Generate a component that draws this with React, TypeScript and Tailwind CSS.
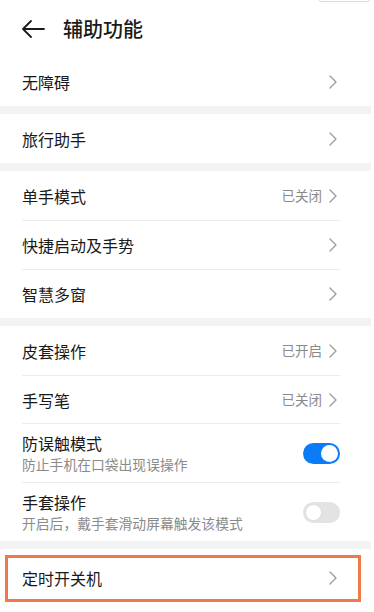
import React from "react";

const FONT = { fontFamily: '"Noto Sans CJK SC", "Noto Sans", sans-serif' };

function Chevron() {
  return (
    <svg width="8" height="14" viewBox="0 0 8 14" className="flex-shrink-0">
      <path d="M1 1l6 6-6 6" fill="none" stroke="#9b9b9b" strokeWidth="1.3" strokeLinecap="round" strokeLinejoin="round" />
    </svg>
  );
}

function Toggle({ on }: { on: boolean }) {
  return on ? (
    <div className="w-[37px] h-[21px] rounded-full bg-[#0a7cf6] flex items-center justify-end p-[2px]">
      <div className="w-[17px] h-[17px] rounded-full bg-white" />
    </div>
  ) : (
    <div className="w-[37px] h-[21px] rounded-full bg-[#e3e3e3] flex items-center p-[2px]">
      <div className="w-[17px] h-[17px] rounded-full bg-white border border-[#dcdcdc]" />
    </div>
  );
}

function Row({ label, status, divider, h = "h-[49px]" }: { label: string; status?: string; divider?: boolean; h?: string }) {
  return (
    <div className={`${h} flex flex-col`}>
      {divider && <div className="mx-[22px] mr-[31px] h-px bg-[#ececec]" />}
      <div className="flex-1 flex items-center pl-[22px] pr-[34px]">
        <span className="flex-1 text-[16px] text-[#191919]">{label}</span>
        {status && <span className="text-[13.5px] text-[#8a8a8a] mr-[7px]">{status}</span>}
        <Chevron />
      </div>
    </div>
  );
}

function ToggleRow({ label, sub, on }: { label: string; sub: string; on: boolean }) {
  return (
    <div className="h-[59px] flex flex-col">
      <div className="mx-[22px] mr-[31px] h-px bg-[#ececec]" />
      <div className="flex-1 flex items-center pl-[22px] pr-[31px]">
        <div className="flex-1 flex flex-col">
          <span className="text-[16px] leading-[22px] text-[#191919]">{label}</span>
          <span className="text-[13.8px] leading-[20px] text-[#8a8a8a]">{sub}</span>
        </div>
        <Toggle on={on} />
      </div>
    </div>
  );
}

function Band() {
  return <div className="h-[8px] bg-[#f3f3f3]" />;
}

export default function App() {
  return (
    <div className="w-[374px] h-[612px] bg-white overflow-hidden" style={FONT}>
      <div className="w-[371px] relative">
        <div className="absolute left-[319px] top-[-10px] w-[51px] h-[12px] border border-[#dcdcdc] rounded-[2px]" />
        <div className="h-[57px] flex items-center pl-[21px]">
          <svg width="24" height="20" viewBox="0 0 24 20" className="mr-[18px]">
            <path d="M23 10H2M10 2L2 10l8 8" fill="none" stroke="#1c1c1c" strokeWidth="1.8" strokeLinecap="round" strokeLinejoin="round" />
          </svg>
          <span className="text-[20px] font-medium text-[#1a1a1a]">辅助功能</span>
        </div>
        <Row label="无障碍" />
        <Band />
        <Row label="旅行助手" />
        <Band />
        <Row label="单手模式" status="已关闭" />
        <Row label="快捷启动及手势" divider />
        <Row label="智慧多窗" divider />
        <Band />
        <Row label="皮套操作" status="已开启" />
        <Row label="手写笔" status="已关闭" divider h="h-[48px]" />
        <ToggleRow label="防误触模式" sub="防止手机在口袋出现误操作" on />
        <ToggleRow label="手套操作" sub="开启后，戴手套滑动屏幕触发该模式" on={false} />
        <Band />
        <div className="relative">
          <Row label="定时开关机" h="h-[57px]" />
          <div className="absolute left-[5px] top-[6px] w-[356px] h-[47px] border-[3px] border-[#ee7a4c]" />
        </div>
      </div>
    </div>
  );
}
